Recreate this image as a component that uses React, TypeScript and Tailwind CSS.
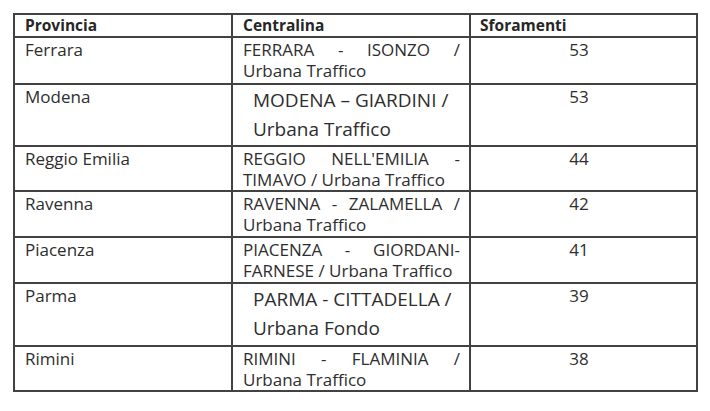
import React from 'react';

type Row = {
  provincia: string;
  first: string[];
  second: string;
  big?: boolean;
  sforamenti: number;
  height: string;
};

const rows: Row[] = [
  { provincia: 'Ferrara', first: ['FERRARA', '-', 'ISONZO', '/'], second: 'Urbana Traffico', sforamenti: 53, height: 'h-[47px]' },
  { provincia: 'Modena', first: ['MODENA – GIARDINI /'], second: 'Urbana Traffico', big: true, sforamenti: 53, height: 'h-[62px]' },
  { provincia: 'Reggio Emilia', first: ['REGGIO', "NELL'EMILIA", '-'], second: 'TIMAVO / Urbana Traffico', sforamenti: 44, height: 'h-[45px]' },
  { provincia: 'Ravenna', first: ['RAVENNA', '-', 'ZALAMELLA', '/'], second: 'Urbana Traffico', sforamenti: 42, height: 'h-[46px]' },
  { provincia: 'Piacenza', first: ['PIACENZA', '-', 'GIORDANI-'], second: 'FARNESE / Urbana Traffico', sforamenti: 41, height: 'h-[46px]' },
  { provincia: 'Parma', first: ['PARMA - CITTADELLA /'], second: 'Urbana Fondo', big: true, sforamenti: 39, height: 'h-[63px]' },
  { provincia: 'Rimini', first: ['RIMINI', '-', 'FLAMINIA', '/'], second: 'Urbana Traffico', sforamenti: 38, height: 'h-[43px]' },
];

const grid = 'grid grid-cols-[216px_2px_236px_2px_225px]';

export default function App() {
  return (
    <div className="min-h-[411px] w-[710px] bg-white pl-[13px] pt-[13px] text-[#2e2e2e] [font-family:'Open_Sans',sans-serif]">
      <div className="w-[685px] border-2 border-[#424242]">
        <div className={`${grid} h-[23px] border-b-2 border-[#424242] text-[15.5px] font-bold leading-[21px] text-[#262626]`}>
          <div className="pl-[10px]">Provincia</div>
          <div className="bg-[#424242]" />
          <div className="pl-[10px]">Centralina</div>
          <div className="bg-[#424242]" />
          <div className="pl-[9px]">Sforamenti</div>
        </div>
        {rows.map((row, i) => (
          <div
            key={row.provincia}
            className={`${grid} ${row.height} ${i < rows.length - 1 ? 'border-b-2 border-[#424242]' : ''} text-[17px] leading-[21px]`}
          >
            <div className="pl-[10px] pt-[1px]">{row.provincia}</div>
            <div className="bg-[#424242]" />
            {row.big ? (
              <div className="pl-[20px] pt-[1px] text-[19px] leading-[29px]">
                <div>{row.first[0]}</div>
                <div>{row.second}</div>
              </div>
            ) : (
              <div className="pl-[10px] pr-[9px] pt-[1px]">
                <div className="flex justify-between">
                  {row.first.map((w, j) => (
                    <span key={j}>{w}</span>
                  ))}
                </div>
                <div>{row.second}</div>
              </div>
            )}
            <div className="bg-[#424242]" />
            <div className="pr-[9px] pt-[1px] text-center">{row.sforamenti}</div>
          </div>
        ))}
      </div>
    </div>
  );
}
